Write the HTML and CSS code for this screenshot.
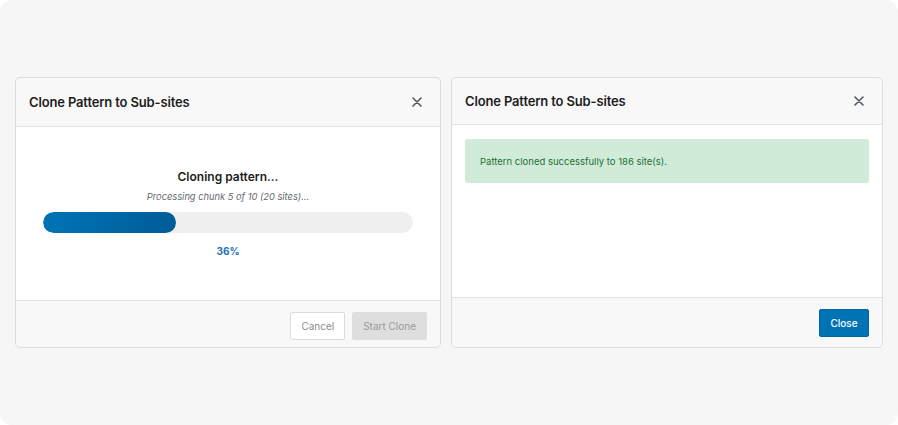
FILE: index.html
```html
<!DOCTYPE html>
<html lang="en">
<head>
  <meta charset="UTF-8">
  <title>Clone Pattern to Sub-sites</title>
  <link rel="stylesheet" href="styles.css">
</head>
<body>
  <div class="stage">
    <div class="modal modal-progress">
      <div class="modal-header">
        <h2>Clone Pattern to Sub-sites</h2>
        <button class="close-x" aria-label="Close">
          <svg width="10" height="10" viewBox="0 0 10 10"><path d="M1 1L9 9M9 1L1 9" stroke="#50575e" stroke-width="1.6" stroke-linecap="round"/></svg>
        </button>
      </div>
      <div class="modal-body progress-body">
        <div class="progress-title">Cloning pattern...</div>
        <div class="progress-sub">Processing chunk 5 of 10 (20 sites)...</div>
        <div class="progress-track"><div class="progress-fill" style="width: 36%"></div></div>
        <div class="progress-pct">36%</div>
      </div>
      <div class="modal-footer">
        <button class="btn btn-secondary">Cancel</button>
        <button class="btn btn-disabled">Start Clone</button>
      </div>
    </div>

    <div class="modal modal-done">
      <div class="modal-header">
        <h2>Clone Pattern to Sub-sites</h2>
        <button class="close-x" aria-label="Close">
          <svg width="10" height="10" viewBox="0 0 10 10"><path d="M1 1L9 9M9 1L1 9" stroke="#50575e" stroke-width="1.6" stroke-linecap="round"/></svg>
        </button>
      </div>
      <div class="modal-body done-body">
        <div class="notice-success">Pattern cloned successfully to 186 site(s).</div>
      </div>
      <div class="modal-footer">
        <button class="btn btn-primary">Close</button>
      </div>
    </div>
  </div>
</body>
</html>
```

FILE: styles.css
```css
html, body {
  margin: 0;
  padding: 0;
  background: #fff;
}
body {
  font-family: Inter, 'Noto Sans', sans-serif;
  color: #1e1e1e;
}
.stage {
  width: 898px;
  height: 425px;
  box-sizing: border-box;
  background: #f6f6f6;
  border-radius: 12px;
  display: flex;
  align-items: center;
  gap: 10px;
  padding: 0 15px;
}
.modal {
  height: 271px;
  box-sizing: border-box;
  border: 1px solid #dcdcde;
  border-radius: 5px;
  background: #f8f8f8;
  display: flex;
  flex-direction: column;
  overflow: hidden;
  flex-shrink: 0;
}
.modal-progress {
  width: 426px;
}
.modal-done {
  width: 432px;
}
.modal-header {
  display: flex;
  align-items: center;
  justify-content: space-between;
  padding: 0 17px 0 13px;
  border-bottom: 1px solid #e2e2e2;
}
.modal-progress .modal-header {
  height: 48px;
}
.modal-done .modal-header {
  height: 46px;
}
.modal-header h2 {
  margin: 0;
  font-size: 13px;
  font-weight: 600;
  color: #1e1e1e;
  letter-spacing: -0.15px;
}
.close-x {
  border: 0;
  background: none;
  padding: 0;
  width: 12px;
  height: 12px;
  display: flex;
  align-items: center;
  justify-content: center;
}
.modal-body {
  flex: 1;
  background: #fff;
  border-bottom: 1px solid #e2e2e2;
}
.progress-body {
  display: flex;
  flex-direction: column;
  align-items: center;
  padding: 42px 27px 0;
}
.progress-title {
  font-size: 12px;
  font-weight: 600;
  color: #1e1e1e;
}
.progress-sub {
  margin-top: 7px;
  font-size: 9.3px;
  font-style: italic;
  color: #646970;
}
.progress-track {
  margin-top: 10px;
  width: 370px;
  height: 21px;
  border-radius: 11px;
  background: #f0f0f0;
  overflow: hidden;
}
.progress-fill {
  height: 100%;
  border-radius: 11px;
  background: linear-gradient(90deg, #0073b5, #005c98);
}
.progress-pct {
  margin-top: 12px;
  font-size: 10px;
  font-weight: 700;
  color: #2271b1;
}
.done-body {
  padding: 14px 13px 0;
}
.notice-success {
  background: #d0ecd9;
  border-radius: 2px;
  color: #1e6f36;
  font-size: 9.5px;
  padding: 17px 15px 16px;
}
.modal-footer {
  display: flex;
  align-items: center;
  justify-content: flex-end;
  gap: 7px;
  padding: 0 13px;
}
.modal-progress .modal-footer {
  height: 46px;
  padding-top: 4px;
  box-sizing: border-box;
}
.modal-done .modal-footer {
  height: 49px;
}
.btn {
  font-family: inherit;
  font-size: 10px;
  height: 28px;
  border-radius: 2px;
  padding: 0 10px;
}
.btn-secondary {
  background: #fff;
  border: 1px solid #dcdcde;
  color: #8a8d91;
}
.btn-disabled {
  background: #dedede;
  border: 1px solid #dedede;
  color: #9a9a9a;
}
.btn-primary {
  background: #0073b5;
  border: 1px solid #0067a3;
  color: #fff;
  font-weight: 500;
  width: 50px;
  padding: 0;
}
```
